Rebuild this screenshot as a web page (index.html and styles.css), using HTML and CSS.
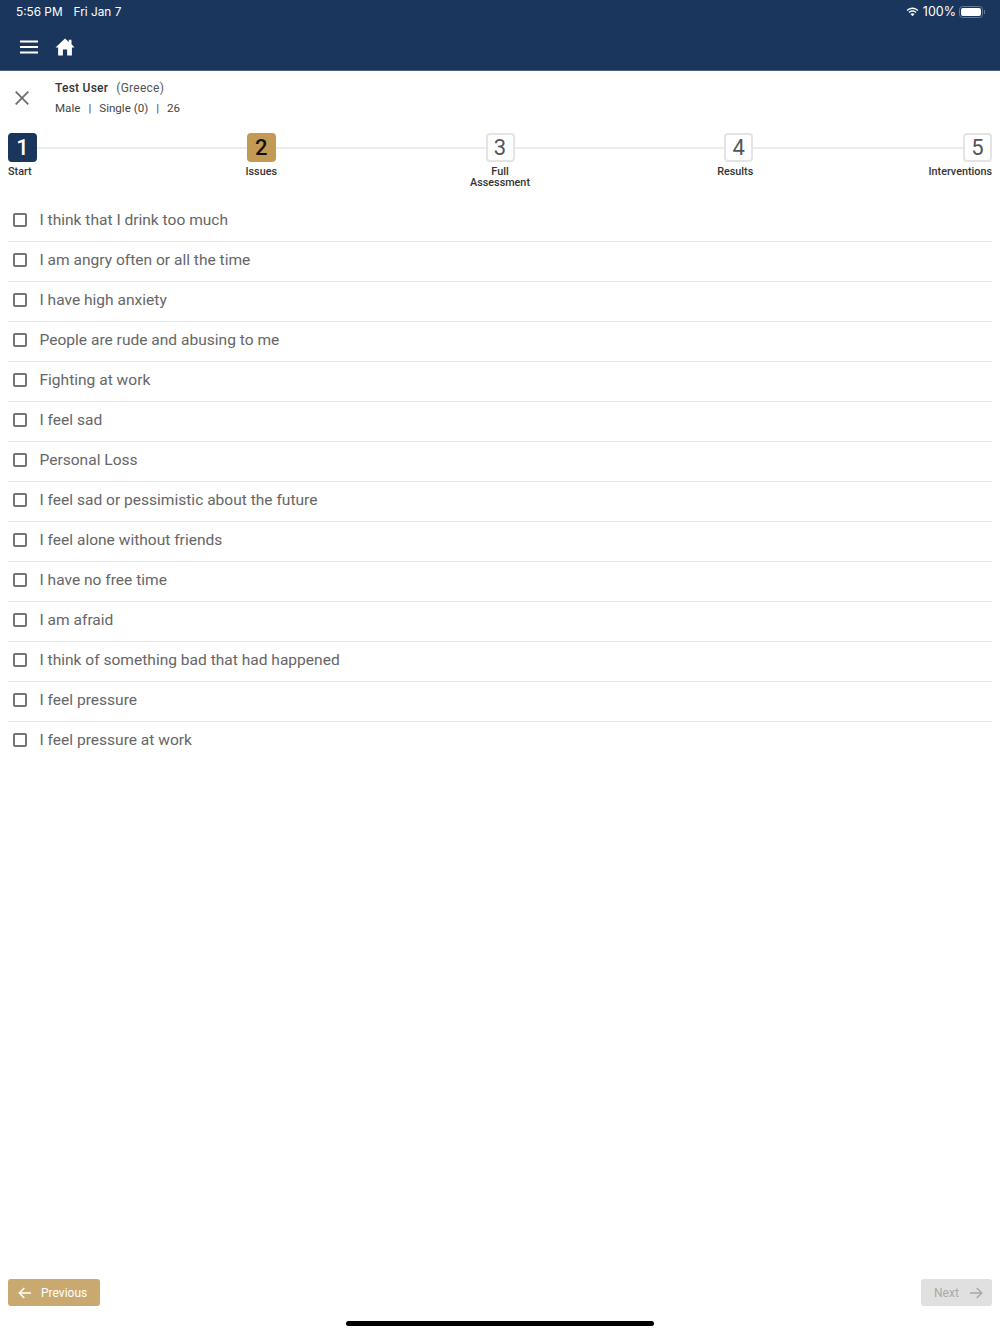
FILE: index.html
```html
<!DOCTYPE html>
<html lang="en">
<head>
    <meta charset="UTF-8">
    <meta name="viewport" content="width=device-width, initial-scale=1.0">
    <title>Issues</title>
    <link rel="stylesheet" href="styles.css">
</head>
<body>
    <header class="top-bar">
        <div class="status-bar">
            <div class="status-time"><span>5:56 PM</span><span>Fri Jan 7</span></div>
            <div class="status-right">
                <svg class="wifi" width="13" height="10" viewBox="0 0 14 11">
                    <path d="M7 2.2c2.1 0 4 .8 5.4 2.2l1-1.1C11.700 1.600 9.500.6 7 .6S2.300 1.600.6 3.300l1 1.100C3 3 4.900 2.200 7 2.200z" fill="#fff"/>
                    <path d="M7 5.200c1.300 0 2.500.5 3.300 1.300l1-1.100C10.200 4.300 8.700 3.700 7 3.700s-3.200.6-4.300 1.700l1 1.100C4.500 5.700 5.700 5.200 7 5.200z" fill="#fff"/>
                    <path d="M7 6.800c-.9 0-1.700.4-2.200.9L7 10.200l2.200-2.500C8.700 7.200 7.900 6.800 7 6.800z" fill="#fff"/>
                </svg>
                <span>100%</span>
                <div class="battery"><div class="battery-fill"></div></div>
                <div class="battery-cap"></div>
            </div>
        </div>
        <nav class="nav-bar">
            <svg width="20" height="14" viewBox="0 0 20 14">
                <path d="M1 1.500h18M1 7h18M1 12.500h18" stroke="#fff" stroke-width="2" fill="none"/>
            </svg>
            <svg width="20" height="18" viewBox="0 0 20 18">
                <path d="M10 .5L.5 9.400h2.600V17.500h4.800V11.500h4.200v6h4.800V9.400h2.600L16.500 6.300V1.800h-2.700v2.100z" fill="#fff"/>
            </svg>
        </nav>
    </header>

    <section class="user-info">
        <svg class="close-icon" width="14" height="14" viewBox="0 0 14 14">
            <path d="M.7.7l12.600 12.600M13.300.7L.7 13.300" stroke="#6e6e6e" stroke-width="1.800" fill="none"/>
        </svg>
        <div class="user-text">
            <p class="user-name"><strong>Test User</strong><span>(Greece)</span></p>
            <p class="user-meta"><span>Male</span><span>|</span><span>Single (0)</span><span>|</span><span>26</span></p>
        </div>
    </section>

    <section class="stepper">
        <div class="step">
            <div class="step-head"><div class="step-box step-done">1</div><div class="step-line"></div></div>
            <div class="step-label">Start</div>
        </div>
        <div class="step">
            <div class="step-head"><div class="step-box step-active">2</div><div class="step-line"></div></div>
            <div class="step-label label-center">Issues</div>
        </div>
        <div class="step">
            <div class="step-head"><div class="step-box">3</div><div class="step-line"></div></div>
            <div class="step-label label-center">Full<br>Assessment</div>
        </div>
        <div class="step">
            <div class="step-head"><div class="step-box">4</div><div class="step-line"></div></div>
            <div class="step-label label-end">Results</div>
        </div>
        <div class="step">
            <div class="step-head"><div class="step-box">5</div></div>
            <div class="step-label label-end">Interventions</div>
        </div>
    </section>

    <ul class="issue-list">
        <li class="issue"><span class="checkbox"></span>I think that I drink too much</li>
        <li class="issue"><span class="checkbox"></span>I am angry often or all the time</li>
        <li class="issue"><span class="checkbox"></span>I have high anxiety</li>
        <li class="issue"><span class="checkbox"></span>People are rude and abusing to me</li>
        <li class="issue"><span class="checkbox"></span>Fighting at work</li>
        <li class="issue"><span class="checkbox"></span>I feel sad</li>
        <li class="issue"><span class="checkbox"></span>Personal Loss</li>
        <li class="issue"><span class="checkbox"></span>I feel sad or pessimistic about the future</li>
        <li class="issue"><span class="checkbox"></span>I feel alone without friends</li>
        <li class="issue"><span class="checkbox"></span>I have no free time</li>
        <li class="issue"><span class="checkbox"></span>I am afraid</li>
        <li class="issue"><span class="checkbox"></span>I think of something bad that had happened</li>
        <li class="issue"><span class="checkbox"></span>I feel pressure</li>
        <li class="issue"><span class="checkbox"></span>I feel pressure at work</li>
    </ul>

    <footer class="footer">
        <div class="footer-buttons">
            <button class="nav-button button-prev">
                <svg width="14" height="12" viewBox="0 0 14 12"><path d="M13 6H1.500M6.300 1L1.300 6l5 5" stroke="#fff" stroke-width="1.500" fill="none"/></svg>
                Previous
            </button>
            <button class="nav-button button-next">
                Next
                <svg width="14" height="12" viewBox="0 0 14 12"><path d="M1 6h11.500M7.700 1l5 5-5 5" stroke="#a8a8a8" stroke-width="1.500" fill="none"/></svg>
            </button>
        </div>
        <div class="home-indicator"></div>
    </footer>
</body>
</html>
```

FILE: styles.css
```css
* {
    margin: 0;
    padding: 0;
    box-sizing: border-box;
}

body {
    font-family: Roboto, Arial, sans-serif;
    background-color: #fff;
    color: #333;
    height: 1334px;
    display: flex;
    flex-direction: column;
    overflow: hidden;
}

.top-bar {
    background-color: #1a365d;
    height: 71px;
    border-bottom: 1px solid #4a6286;
    color: #fff;
}

.status-bar {
    height: 23px;
    padding: 0 15px 0 16px;
    display: flex;
    justify-content: space-between;
    align-items: center;
    font-family: Inter, sans-serif;
    font-size: 11.8px;
}

.status-time {
    display: flex;
    gap: 11px;
}

.status-right {
    display: flex;
    align-items: center;
    font-size: 12.5px;
}

.wifi {
    margin-right: 4px;
}

.battery {
    width: 24px;
    height: 12px;
    margin-left: 3px;
    border: 1px solid #64799b;
    border-radius: 3.5px;
    padding: 1px;
}

.battery-fill {
    height: 100%;
    background-color: #fff;
    border-radius: 2px;
}

.battery-cap {
    width: 1px;
    height: 4px;
    margin-left: 1px;
    background-color: #64799b;
}

.nav-bar {
    height: 47px;
    padding: 0 0 0 19px;
    display: flex;
    align-items: center;
    gap: 16px;
}

.user-info {
    height: 62px;
    display: flex;
    align-items: center;
    padding: 0 0 8px 15px;
}

.user-text {
    margin-left: 26px;
    font-size: 12px;
    line-height: 20px;
}

.user-name {
    display: flex;
    gap: 8px;
    letter-spacing: 0.25px;
}

.user-name strong {
    font-weight: 500;
    color: #333;
}

.user-name span {
    color: #555;
}

.user-meta {
    display: flex;
    gap: 8px;
    font-size: 11.6px;
    color: #444;
}

.stepper {
    display: grid;
    grid-template-columns: repeat(4, 1fr) 29px;
    padding: 0 8px;
    height: 69px;
}

.step-head {
    display: flex;
    align-items: center;
}

.step-box {
    width: 29px;
    height: 29px;
    flex-shrink: 0;
    display: flex;
    align-items: center;
    justify-content: center;
    border: 2px solid #e4e4e4;
    border-radius: 4px;
    font-size: 22px;
    color: #555;
}

.step-done {
    background-color: #1a365d;
    border-color: #1a365d;
    color: #fff;
    font-weight: 500;
}

.step-active {
    background-color: #c29a54;
    border-color: #c29a54;
    color: #111;
    font-weight: 500;
}

.step-line {
    flex: 1;
    height: 2px;
    background-color: #ececec;
}

.step-label {
    width: 29px;
    margin-top: 4px;
    display: flex;
    white-space: nowrap;
    font-size: 10.8px;
    line-height: 11px;
    font-weight: 500;
    color: #333;
}

.label-center {
    justify-content: center;
    text-align: center;
}

.label-end {
    justify-content: flex-end;
}

.issue-list {
    list-style: none;
    padding: 0 8px;
}

.issue {
    height: 40px;
    display: flex;
    align-items: center;
    padding: 0 0 3px 5px;
    border-bottom: 1px solid #e4e4e4;
    font-size: 15.55px;
    color: #666;
}

.issue:last-child {
    border-bottom-color: transparent;
}

.checkbox {
    width: 14px;
    height: 14px;
    margin-right: 12.5px;
    border: 2px solid #757575;
    border-radius: 2px;
}

.footer {
    margin-top: auto;
}

.footer-buttons {
    display: flex;
    justify-content: space-between;
    padding: 0 8px;
}

.nav-button {
    height: 27px;
    display: flex;
    align-items: center;
    border: none;
    border-radius: 3px;
    font-family: inherit;
    font-size: 12px;
}

.button-prev {
    width: 92px;
    padding-left: 10px;
    gap: 9px;
    background-color: #c9a96f;
    color: #fff;
}

.button-next {
    width: 71px;
    padding-left: 13px;
    gap: 10px;
    background-color: #e0e0e0;
    color: #a8a8a8;
}

.home-indicator {
    width: 308px;
    height: 5px;
    margin: 15px auto 8px;
    background-color: #000;
    border-radius: 3px;
}
```
